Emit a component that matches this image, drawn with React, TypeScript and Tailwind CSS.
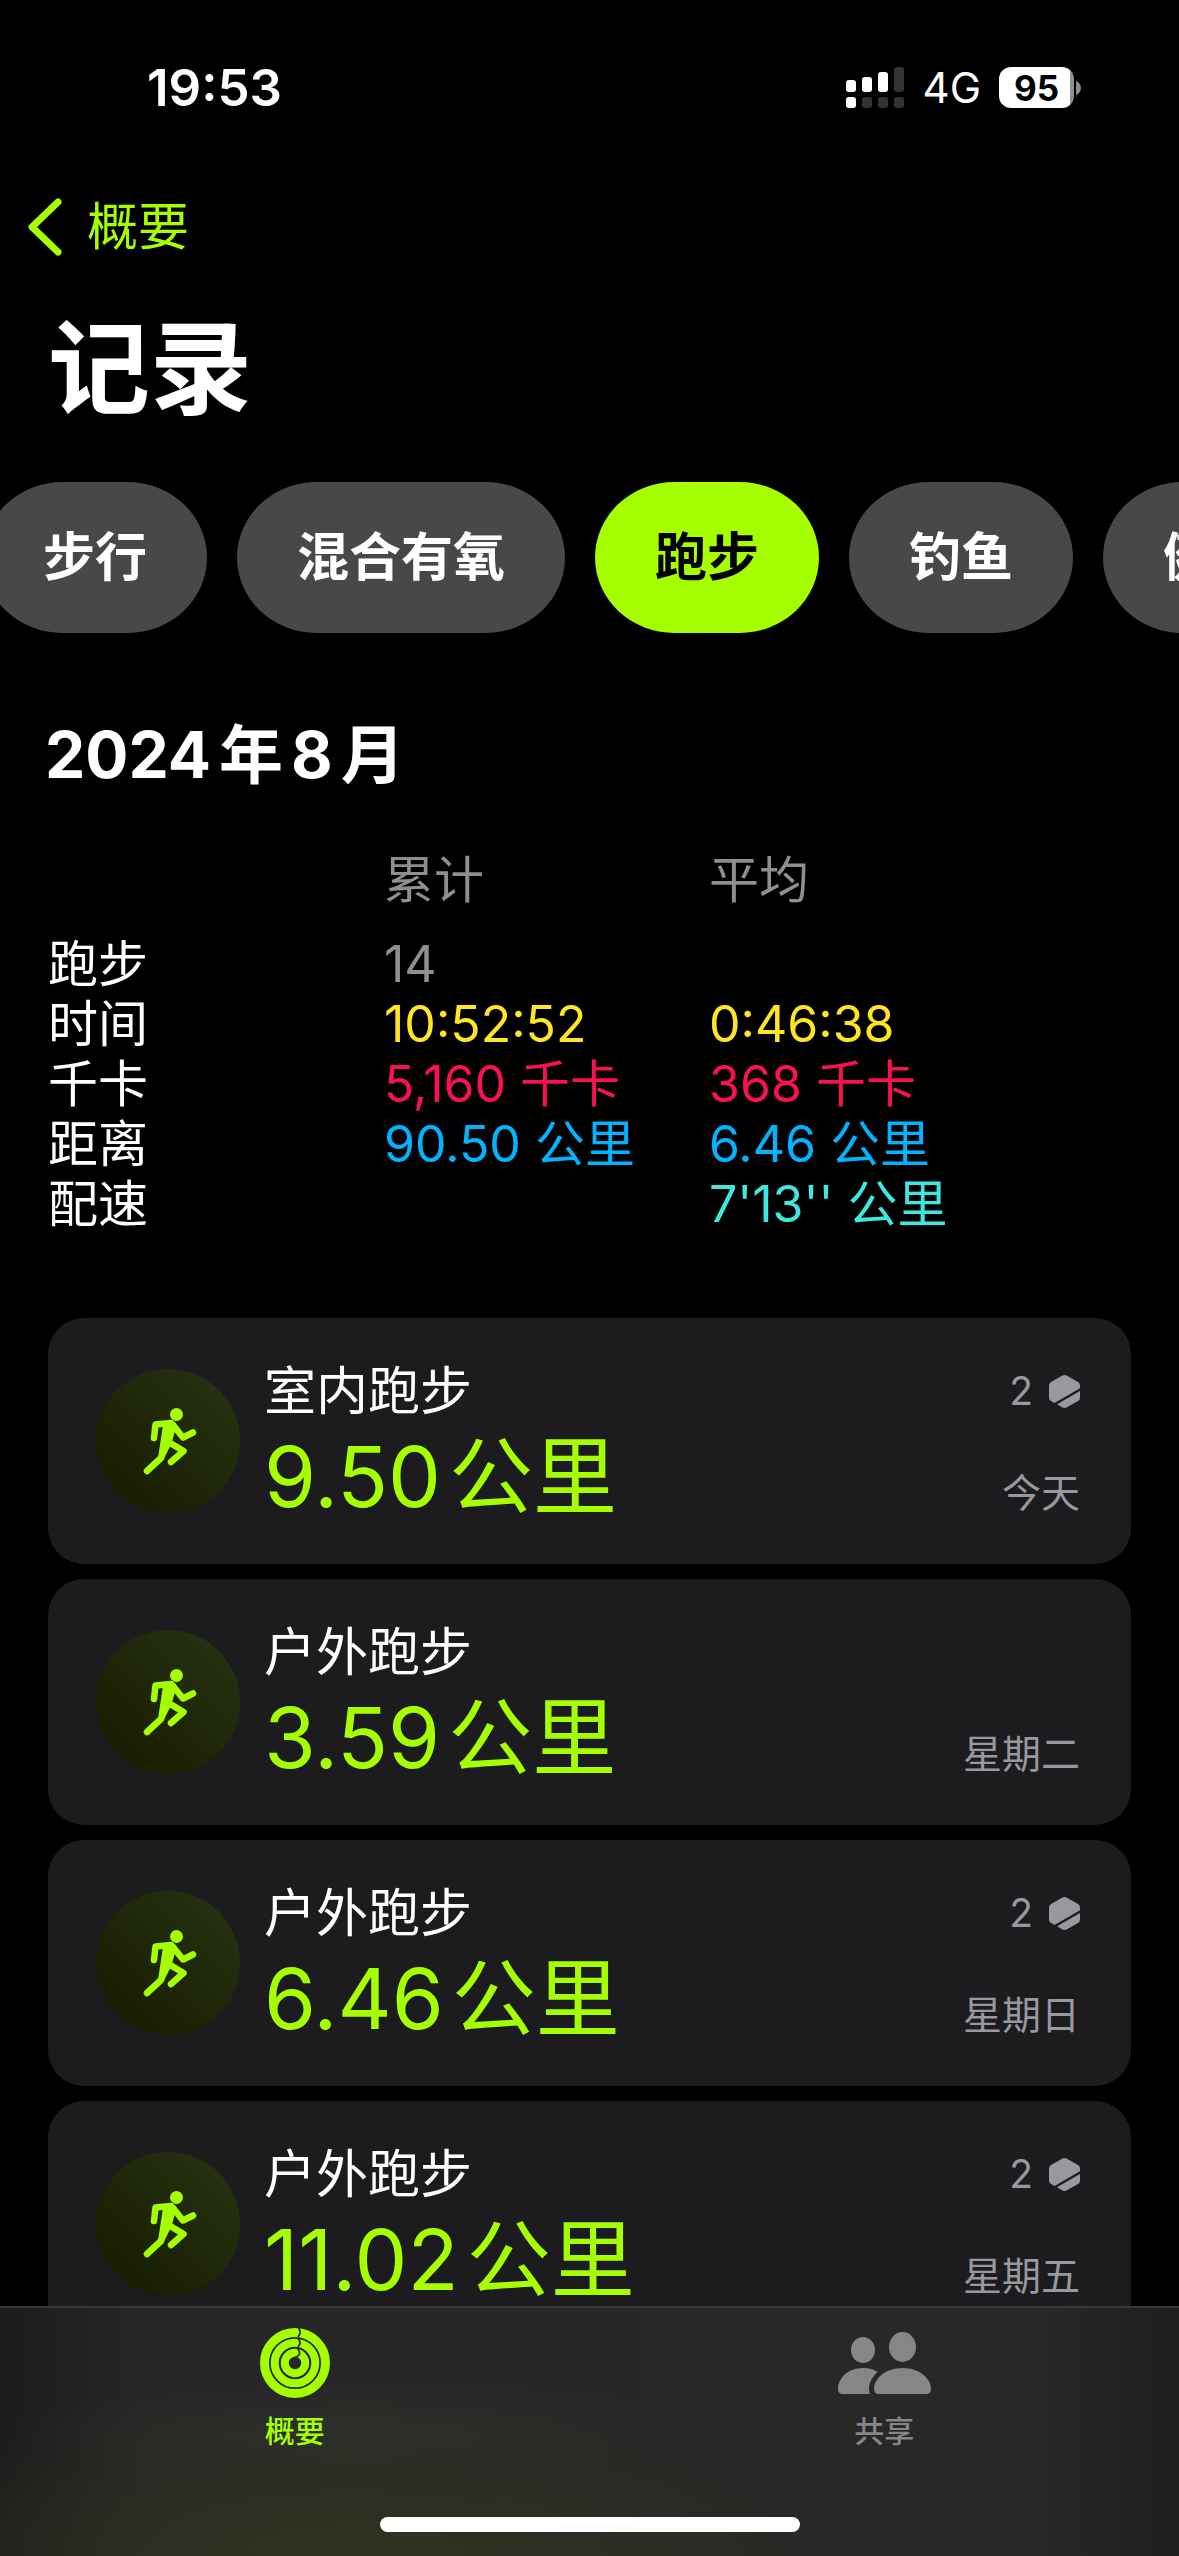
import React from 'react'

const TYPES = ['步行', '混合有氧', '跑步', '钓鱼', '健身']

const SUMMARY = [
  { label: '跑步', total: '14', average: '', color: 'text-[#8e8e93]' },
  { label: '时间', total: '10:52:52', average: '0:46:38', color: 'text-[#ffe620]' },
  { label: '千卡', total: '5,160 千卡', average: '368 千卡', color: 'text-[#fa114f]' },
  { label: '距离', total: '90.50 公里', average: '6.46 公里', color: 'text-[#00b4ff]' },
  { label: '配速', total: '', average: "7'13'' 公里", color: 'text-[#3ce8e0]' },
]

const WORKOUTS = [
  { name: '室内跑步', distance: '9.50', day: '今天', awards: 2 },
  { name: '户外跑步', distance: '3.59', day: '星期二', awards: 0 },
  { name: '户外跑步', distance: '6.46', day: '星期日', awards: 2 },
  { name: '户外跑步', distance: '11.02', day: '星期五', awards: 2 },
]

const StatusBar = () => (
  <div className="flex items-center justify-between pt-[57px] pr-[98px] pl-[147px] h-[118px]">
    <span className="text-[51px] leading-[60px] font-semibold">19:53</span>
    <div className="flex items-center">
      <svg width="58" height="41" viewBox="0 0 58 41" fill="#fff" aria-hidden="true">
        <rect x="0" y="13" width="10" height="12" rx="3" />
        <rect x="16" y="10" width="10" height="15" rx="3" />
        <rect x="32" y="5" width="10" height="20" rx="3" />
        <rect x="48" y="0" width="10" height="25" rx="3" fill="#333" />
        <rect x="0" y="30" width="10" height="11" rx="3" />
        <rect x="16" y="30" width="10" height="11" rx="3" fill="#333" />
        <rect x="32" y="30" width="10" height="11" rx="3" fill="#333" />
        <rect x="48" y="30" width="10" height="11" rx="3" fill="#333" />
      </svg>
      <span className="ml-[19px] text-[42px] leading-[48px]">4G</span>
      <div className="ml-[18px] w-[75px] h-[41px] rounded-[12px] bg-linear-to-r from-white from-95% to-[#8e8e8e] to-95% flex items-center justify-center text-black text-[35px] leading-[40px] font-bold">
        95
      </div>
      <svg className="ml-[2px]" width="5" height="14" viewBox="0 0 5 14" fill="#8e8e8e" aria-hidden="true">
        <path d="M0 0C3 1 5 4 5 7S3 13 0 14Z" />
      </svg>
    </div>
  </div>
)

const RunnerIcon = () => (
  <svg
    width="54"
    height="68"
    viewBox="0 0 54 68"
    fill="none"
    stroke="#a6ff00"
    strokeWidth="6.500"
    strokeLinecap="round"
    strokeLinejoin="round"
    aria-hidden="true"
  >
    <circle cx="33.500" cy="7.500" r="6.500" fill="#a6ff00" stroke="none" />
    <path d="M11 31L12.500 17.500L28 16" />
    <path d="M30 18L40 30.500L50 25.500" />
    <path d="M25.500 35L40.500 44L28 55" />
    <path d="M18 51L4 64" />
    <path d="M22.500 18L31 18L26 36L18.500 51L17.500 51Z" fill="#a6ff00" strokeWidth="5" />
  </svg>
)

const AwardIcon = () => (
  <svg width="31" height="33" viewBox="0 0 31 33" fill="#98989f" aria-hidden="true">
    <path d="M13 .7Q15.500-.6 18 .7L29 7Q31 8.300 31 10.500V13.300L5.500 28L2 26Q0 24.800 0 22.500V10.500Q0 8.300 2 7Z" />
    <path d="M31 16V22.500Q31 24.800 29 26L18 32.300Q15.500 33.600 13 32.300L8 29.300Z" />
  </svg>
)

const RingsIcon = () => (
  <svg width="70" height="70" viewBox="0 0 70 70" fill="none" stroke="#a6ff00" aria-hidden="true">
    <circle cx="35" cy="35" r="30.500" strokeWidth="9" />
    <circle cx="35" cy="35" r="20.300" strokeWidth="8" />
    <circle cx="35" cy="35" r="10.200" strokeWidth="8" />
    <g stroke="#282a28" strokeWidth="1.700">
      <path d="M38.500 0Q42 4.500 38 9" />
      <path d="M38 10.500Q42 15 38 19" />
      <path d="M37.500 20.500Q41.500 25 38 28Q36 29.500 34 29.500" />
    </g>
  </svg>
)

const PeopleIcon = () => (
  <svg width="93" height="62" viewBox="0 0 93 62" fill="#868686" aria-hidden="true">
    <ellipse cx="25" cy="18" rx="12" ry="13" />
    <ellipse cx="64.500" cy="15" rx="13.500" ry="15" />
    <path d="M25 36C31 36 36 37.500 39.500 40C34 45 31 51 31 57Q31 60 32 62H5Q0 62 0 57C0 47 9 36 25 36Z" />
    <path d="M64.500 36C82 36 93 47 93 57Q93 62 88 62H41Q36 62 36 57C36 47 47 36 64.500 36Z" />
  </svg>
)

const WorkoutCard = ({ name, distance, day, awards }: (typeof WORKOUTS)[number]) => (
  <li className="flex h-[246px] shrink-0 rounded-[36px] bg-[#1c1c1e] pl-12 pr-[51px]">
    <div className="mt-[51px] size-36 shrink-0 rounded-full bg-linear-to-tr from-[#161b00] to-[#283414] flex items-center justify-center pl-1">
      <RunnerIcon />
    </div>
    <div className="ml-6 mt-[42px] flex-1">
      <h3 className="text-[52px] leading-[64px]">{name}</h3>
      <p className="flex items-baseline gap-2 text-[84px] leading-[106px] text-[#a6ff00]">
        <span>{distance}</span>
        <span>公里</span>
      </p>
    </div>
    <div className="flex flex-col items-end justify-between pt-[46px] pb-[44px] text-[39px] leading-[54px] text-[#98989f]">
      <div className="flex h-[54px] items-center gap-4">
        {awards > 0 && (
          <>
            <span>{awards}</span>
            <AwardIcon />
          </>
        )}
      </div>
      <span>{day}</span>
    </div>
  </li>
)

const TabBar = () => (
  <nav className="shrink-0 border-t-2 border-[#38383a] bg-[#262626] bg-[radial-gradient(ellipse_at_30%_100%,#2e3420_0%,transparent_45%),radial-gradient(ellipse_at_30%_50%,#2c2e2a_0%,transparent_30%),linear-gradient(90deg,#1c1c1c_0%,#262626_12%,#282828_88%,#1e1e1e_100%)]">
    <div className="grid grid-cols-2">
      <a href="#summary" className="flex flex-col items-center pt-5 text-[#a6ff00]">
        <RingsIcon />
        <span className="mt-[13px] text-[30px] leading-[40px] font-medium">概要</span>
      </a>
      <a href="#sharing" className="flex flex-col items-center pt-6 text-[#868686]">
        <PeopleIcon />
        <span className="mt-[17px] text-[30px] leading-[40px] font-medium">共享</span>
      </a>
    </div>
    <div className="mx-auto mt-[66px] mb-6 h-[15px] w-[420px] rounded-full bg-white" />
  </nav>
)

const App = () => {
  return (
    <div className="flex h-screen flex-col overflow-hidden bg-black text-white font-[Inter,'Noto_Sans_CJK_SC',sans-serif]">
      <StatusBar />

      <main className="flex min-h-0 flex-1 flex-col overflow-y-auto [scrollbar-width:none]">
        <a href="#back" className="mt-[72px] flex items-center gap-6 self-start pl-[27px] text-[51px] leading-[74px] text-[#a6ff00]">
          <svg width="36" height="58" viewBox="0 0 36 58" fill="none" stroke="#a6ff00" strokeWidth="7" strokeLinecap="round" strokeLinejoin="round" aria-hidden="true">
            <path d="M31 4L5 29L31 54" />
          </svg>
          概要
        </a>

        <h1 className="mt-[43px] pl-12 text-[102px] leading-[124px] font-bold">记录</h1>

        <div className="-ml-[17px] mt-[51px] flex shrink-0 gap-[30px] overflow-x-auto [scrollbar-width:none]">
          {TYPES.map((type) => (
            <button
              key={type}
              className={`h-[151px] shrink-0 rounded-[80px/76px] px-[60px] text-[52px] leading-[74px] font-bold ${
                type === '跑步' ? 'bg-[#a6ff00] text-black' : 'bg-[#48484a]'
              }`}
            >
              {type}
            </button>
          ))}
        </div>

        <h2 className="mt-[74px] flex items-baseline gap-2 pl-[45px] text-[64px] leading-[96px] font-bold">
          <span>2024</span>
          <span>年</span>
          <span>8</span>
          <span>月</span>
        </h2>

        <table className="mx-12 mt-[47px] table-fixed text-left text-[50px] leading-[60px]">
          <thead>
            <tr className="text-[#8e8e93]">
              <td className="w-[336px]"></td>
              <th scope="col" className="w-[325px] pb-6 font-normal">累计</th>
              <th scope="col" className="pb-6 font-normal">平均</th>
            </tr>
          </thead>
          <tbody>
            {SUMMARY.map((row) => (
              <tr key={row.label}>
                <th scope="row" className="font-normal">{row.label}</th>
                <td className={row.color}>{row.total}</td>
                <td className={row.color}>{row.average}</td>
              </tr>
            ))}
          </tbody>
        </table>

        <ul className="mx-12 mt-[84px] flex flex-col gap-[15px]">
          {WORKOUTS.map((workout) => (
            <WorkoutCard key={workout.day} {...workout} />
          ))}
        </ul>
      </main>

      <TabBar />
    </div>
  )
}

export default App
